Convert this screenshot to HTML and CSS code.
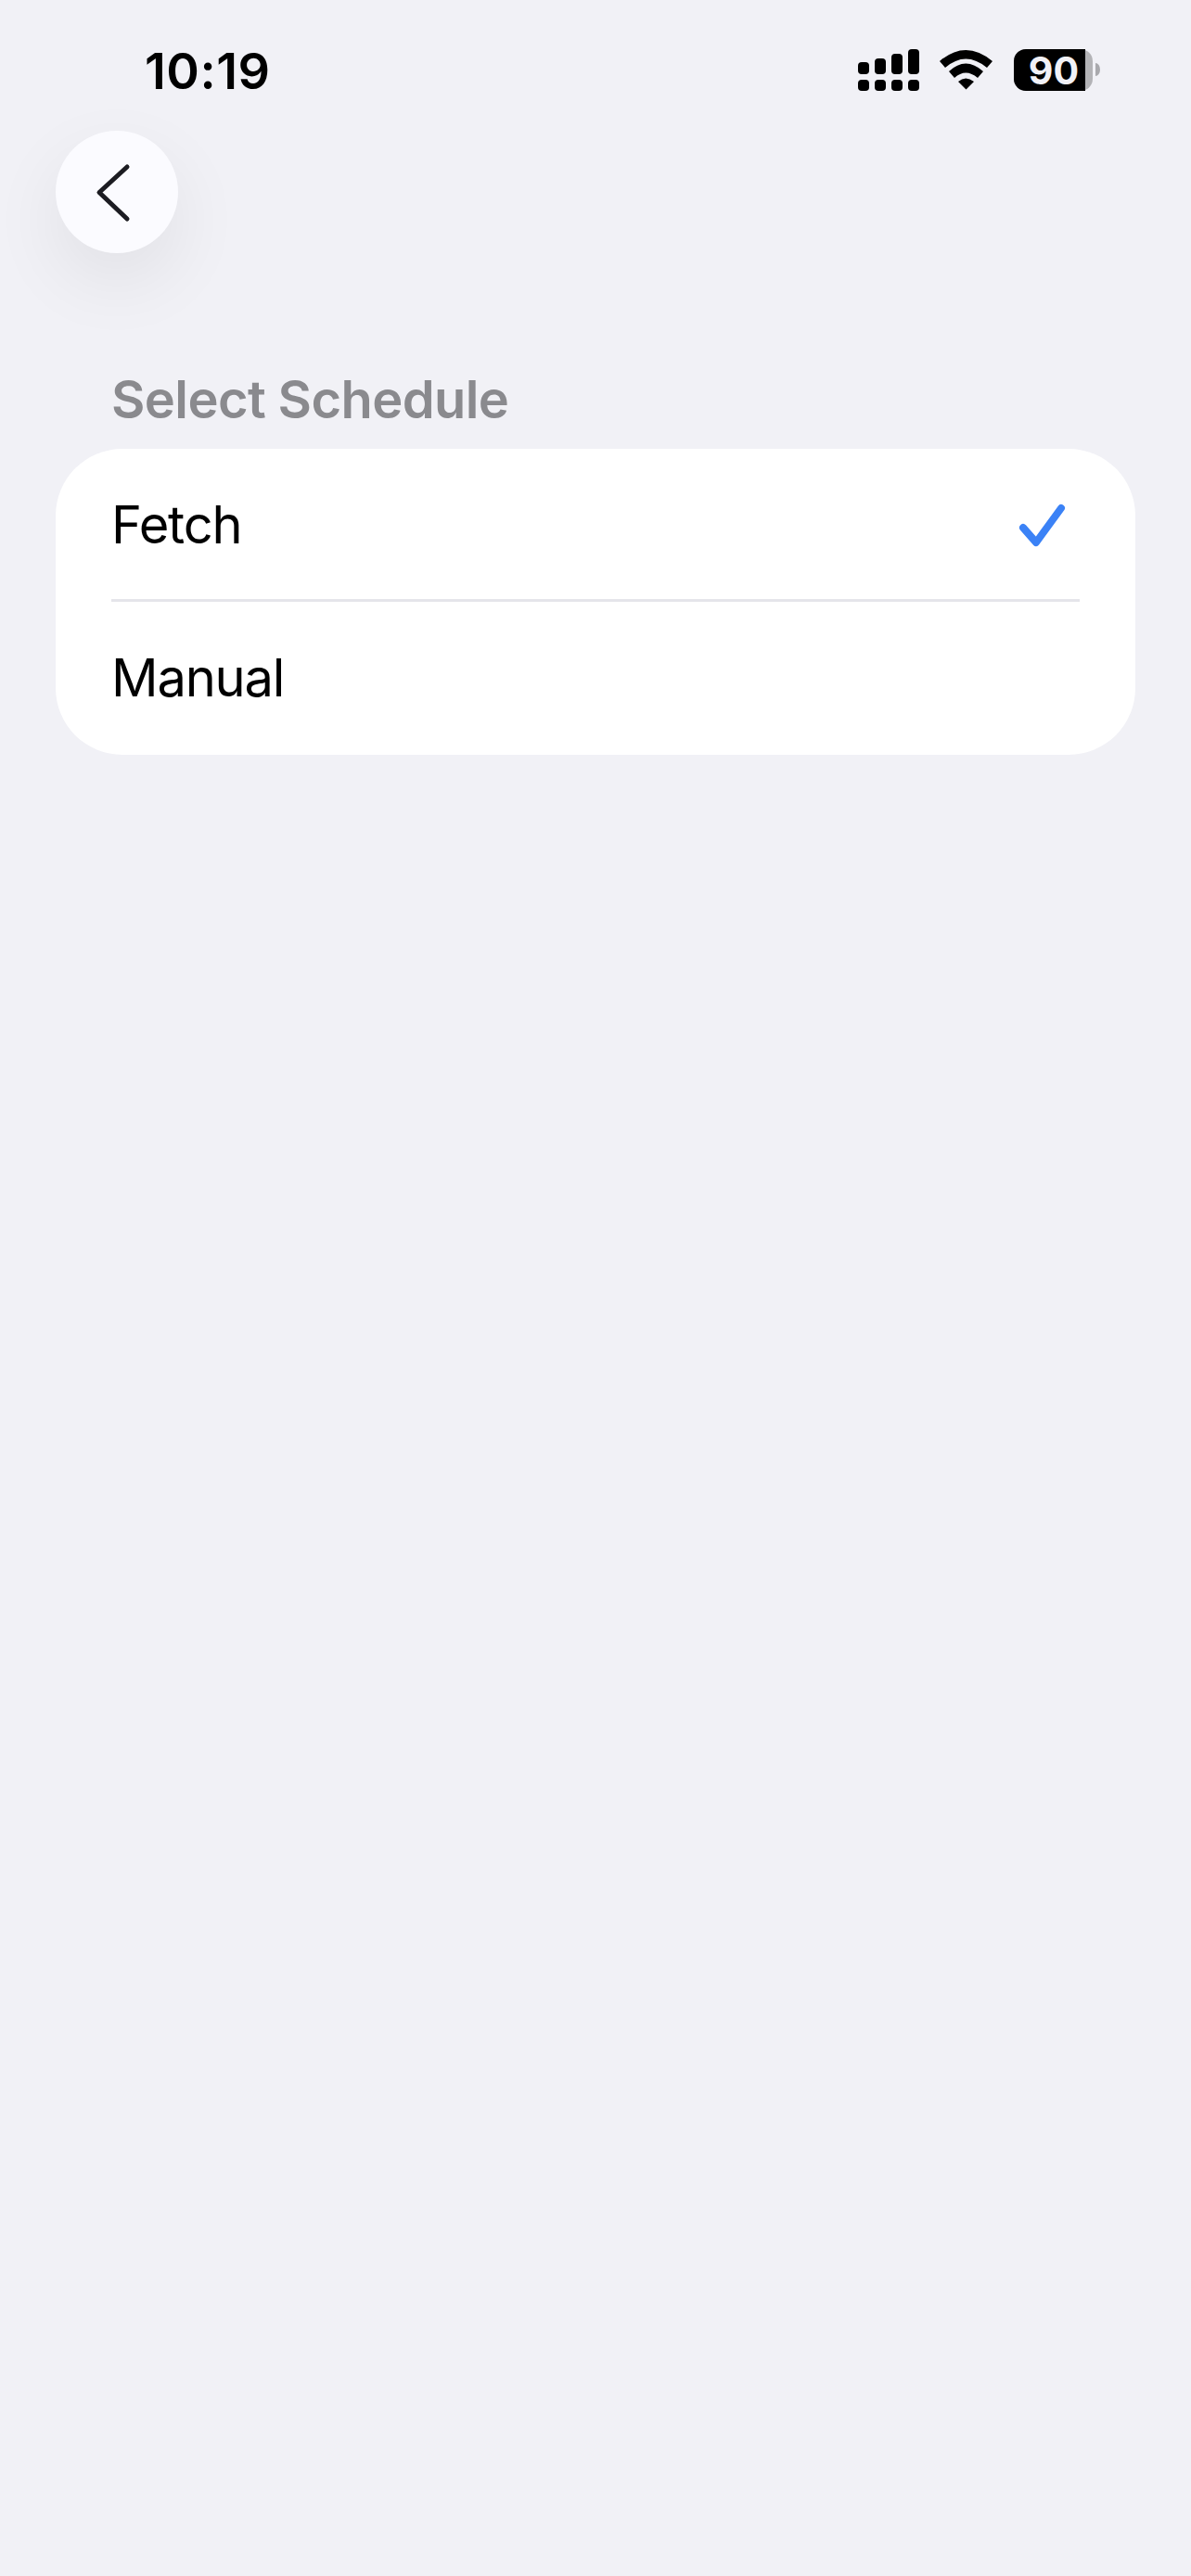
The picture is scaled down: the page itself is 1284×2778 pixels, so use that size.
FILE: index.html
```html
<!DOCTYPE html>
<html lang="en">
<head>
    <meta charset="UTF-8">
    <meta name="viewport" content="width=device-width, initial-scale=1.0">
    <title>Select Schedule</title>
    <link rel="stylesheet" href="styles.css">
</head>
<body>
    <div class="app">
        <div class="status-bar">
            <span class="time">10:19</span>
            <svg class="status-icons" width="261" height="57" viewBox="925 47 261 57">
                <!-- signal -->
                <g fill="#000">
                    <rect x="925" y="67" width="12" height="13" rx="4"/>
                    <rect x="943" y="63" width="12" height="17" rx="4"/>
                    <rect x="961" y="58" width="12" height="22" rx="4"/>
                    <rect x="979" y="53" width="12" height="27" rx="4"/>
                    <rect x="925" y="86" width="12" height="12" rx="4"/>
                    <rect x="943" y="86" width="12" height="12" rx="4"/>
                    <rect x="961" y="86" width="12" height="12" rx="4"/>
                    <rect x="979" y="86" width="12" height="12" rx="4"/>
                </g>
                <!-- wifi -->
                <g fill="#000">
                    <path d="M1013 66 Q1041 42 1070 66 L1064 73 Q1041 54 1019 73 Z"/>
                    <path d="M1023 77 Q1041 60 1060 77 L1054 84 Q1041 73 1029 84 Z"/>
                    <path d="M1033 88 Q1041 81 1050 88 L1041.500 96.500 Z"/>
                </g>
                <!-- battery -->
                <rect x="1093" y="53" width="85" height="45" rx="13" fill="#b3b3b6"/>
                <path d="M1106 53 H1170 V98 H1106 A13 13 0 0 1 1093 85 V66 A13 13 0 0 1 1106 53 Z" fill="#000"/>
                <path d="M1181 68 A5 7 0 0 1 1181 82 Z" fill="#a9a9ad"/>
                <text class="battery-level" x="1136" y="91" text-anchor="middle">90</text>
            </svg>
        </div>

        <button class="back">
            <svg width="44" height="66" viewBox="0 0 44 66">
                <path d="M36 6 L6 33.500 L36 62" fill="none" stroke="#1c1c22" stroke-width="5" stroke-linecap="round" stroke-linejoin="round"/>
            </svg>
        </button>

        <div class="section-title">Select Schedule</div>

        <div class="card">
            <div class="row">
                <span>Fetch</span>
                <svg class="check" width="52" height="52" viewBox="0 0 52 52">
                    <path d="M5 29 L19 45 L46 8" fill="none" stroke="#3b82f6" stroke-width="8" stroke-linecap="round" stroke-linejoin="round"/>
                </svg>
            </div>
            <div class="sep"></div>
            <div class="row">
                <span>Manual</span>
            </div>
        </div>
    </div>
</body>
</html>
```

FILE: styles.css
```css
* { margin: 0; padding: 0; box-sizing: border-box; }
body {
    font-family: Inter, "Liberation Sans", sans-serif;
    background: #f1f1f6;
    color: #000;
}
.app {
    min-height: 2778px;
    padding: 0 60px;
}
.status-bar {
    display: flex;
    justify-content: space-between;
    align-items: flex-start;
    height: 141px;
    padding: 45px 38px 0 96px;
}
.time {
    font-size: 54px;
    line-height: 63px;
    font-weight: 600;
    letter-spacing: 0.5px;
}
.status-icons {
    margin-top: 2px;
}
.battery-level {
    font-family: Inter, "Liberation Sans", sans-serif;
    font-size: 41px;
    font-weight: 700;
    fill: #f1f1f6;
}
.back {
    display: flex;
    align-items: center;
    justify-content: center;
    width: 132px;
    height: 132px;
    border: none;
    border-radius: 50%;
    background: #fbfbff;
    box-shadow: 0 30px 80px rgba(0,0,0,0.07);
}
.back svg {
    margin-right: 6px;
}
.section-title {
    margin: 124px 0 0 60px;
    height: 87px;
    font-size: 56px;
    line-height: 68px;
    font-weight: 600;
    letter-spacing: -0.6px;
    color: #8a8a8e;
}
.card {
    background: #fff;
    border-radius: 72px;
    padding: 0 60px 3px;
}
.row {
    display: flex;
    align-items: center;
    justify-content: space-between;
    height: 162px;
    padding-top: 2px;
    font-size: 56px;
    letter-spacing: -1.2px;
}
.check {
    margin-right: 14px;
}
.sep {
    height: 3px;
    background: #e5e5ea;
}
```
